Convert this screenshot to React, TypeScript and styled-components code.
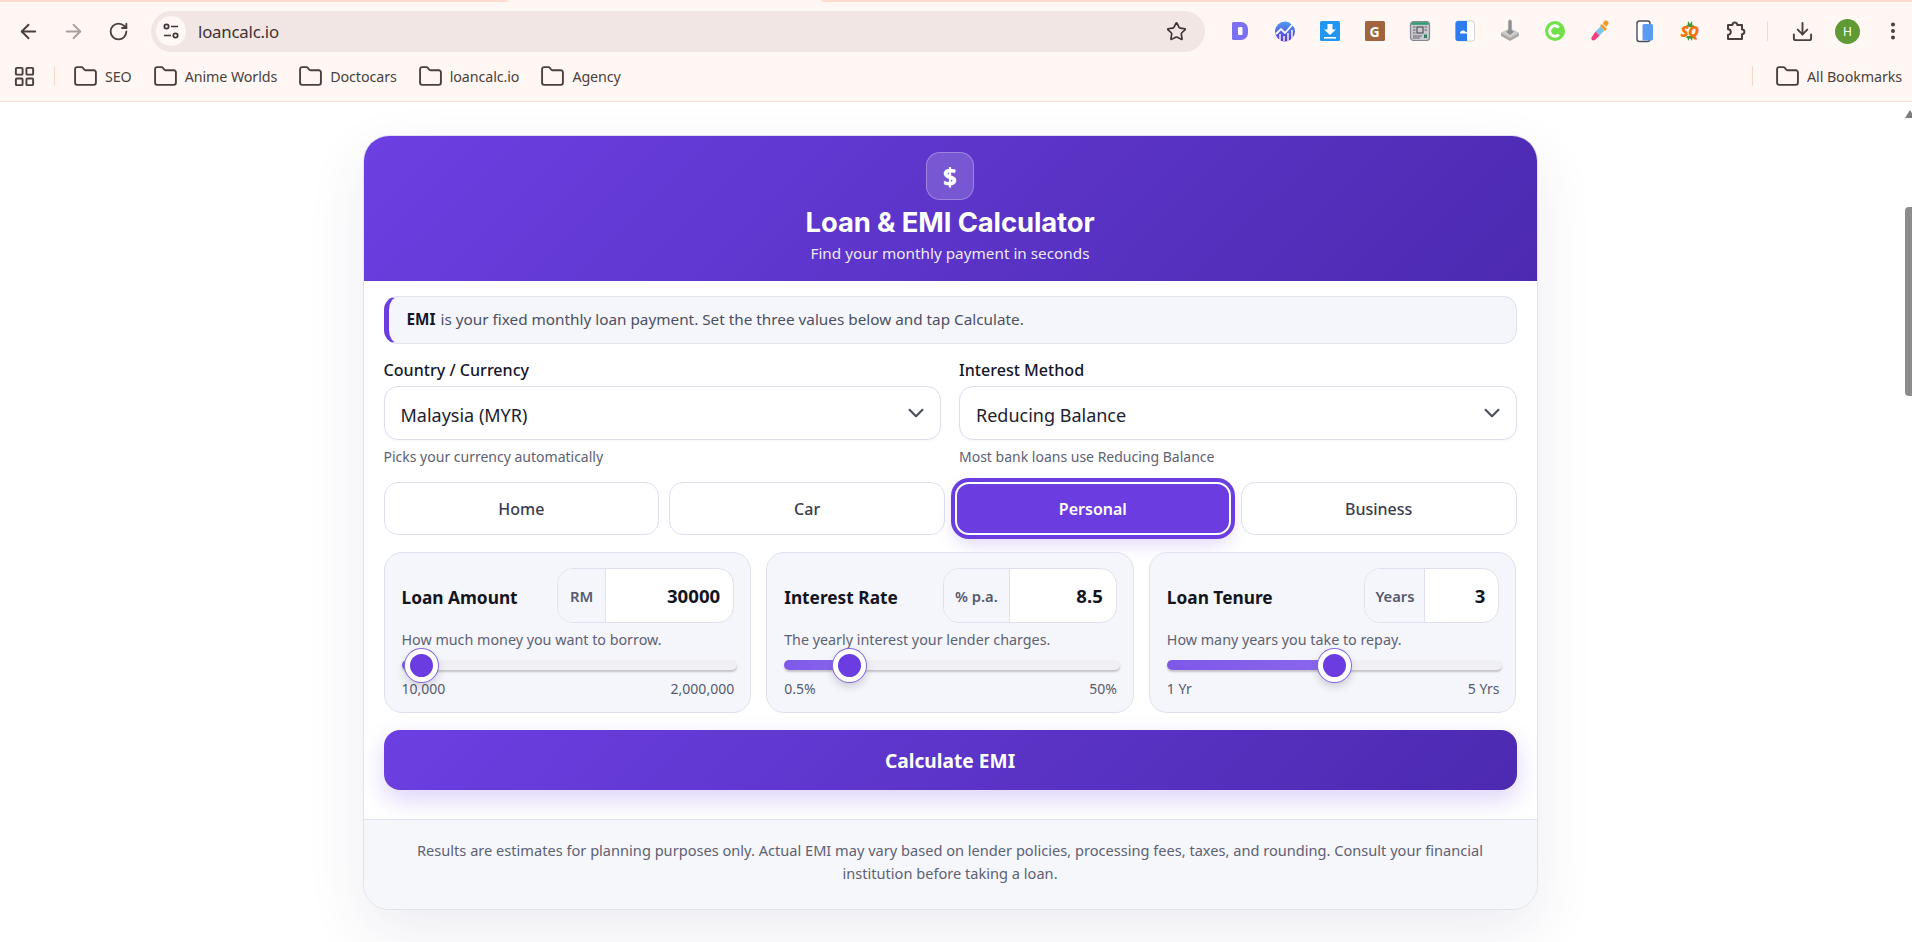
import React from 'react';
import styled, { createGlobalStyle } from 'styled-components';
import {
  ArrowLeft,
  ArrowRight,
  ChevronDown,
  Download,
  EllipsisVertical,
  Folder,
  LayoutGrid,
  RotateCw,
  Star,
} from 'lucide-react';

const PURPLE = '#6b3de0';
const GRADIENT = 'linear-gradient(135deg, #6c3fe2 0%, #4c2ab0 100%)';

const GlobalStyle = createGlobalStyle`
  html, body {
    margin: 0;
    padding: 0;
    background: #fff;
    overflow: hidden;
    font-family: "Noto Sans", "Open Sans", Arial, sans-serif;
  }
  * { box-sizing: border-box; }
`;

const Shell = styled.div`
  width: 1912px;
  height: 942px;
  display: flex;
  flex-direction: column;
  overflow: hidden;
`;

/* browser chrome */
const Strip = styled.div`
  height: 2px;
  flex: none;
  background: linear-gradient(90deg, #ffdcd0 0 506px, #fff6f2 510px 820px, #ffdcd0 824px);
`;

const Toolbar = styled.div`
  height: 58px;
  flex: none;
  padding-left: 6px;
  display: flex;
  align-items: center;
  background: #fff7f3;
`;

const ToolButton = styled.div<{ $muted?: boolean }>`
  width: 45px;
  height: 45px;
  flex: none;
  display: flex;
  align-items: center;
  justify-content: center;
  color: ${(p) => (p.$muted ? '#a8a09e' : '#4a3f3d')};
`;

const Omnibox = styled.div`
  width: 1054px;
  height: 41px;
  flex: none;
  margin-left: 10px;
  padding: 0 18px 0 5px;
  border-radius: 21px;
  background: #f1e6e4;
  display: flex;
  align-items: center;
  color: #3d3332;
`;

const SiteChip = styled.span`
  width: 30px;
  height: 30px;
  border-radius: 50%;
  background: #fff8f5;
  display: flex;
  align-items: center;
  justify-content: center;
`;

const UrlText = styled.span`
  margin-left: 12px;
  flex: 1;
  font-size: 16.8px;
  letter-spacing: -0.2px;
`;

const Extensions = styled.div`
  margin-left: 12px;
  display: flex;
  flex: none;
`;

const ExtSlot = styled.div`
  width: 45px;
  height: 45px;
  display: flex;
  align-items: center;
  justify-content: center;
  color: #4a3f3d;
`;

const ChromeDivider = styled.span`
  width: 1px;
  height: 20px;
  flex: none;
  background: #fbd6ca;
`;

const ToolbarDivider = styled(ChromeDivider)`
  margin: 0 12px 0 10px;
`;

const Avatar = styled.span`
  width: 25px;
  height: 25px;
  border-radius: 50%;
  background: #5f9a35;
  color: #fff;
  font-size: 12px;
  display: flex;
  align-items: center;
  justify-content: center;
`;

const BookmarksBar = styled.div`
  height: 42px;
  flex: none;
  padding: 0 10px 9px 13px;
  display: flex;
  align-items: center;
  background: #fff7f3;
  border-bottom: 1px solid #fbe2da;
  color: #4a3f3d;
`;

const AppsIcon = styled.span`
  display: flex;
  width: 23px;
`;

const BarDivider = styled(ChromeDivider)`
  margin: 0 18px 0 18px;
`;

const Bookmark = styled.div`
  display: flex;
  align-items: center;
  gap: 7px;
  margin-right: 21px;
  font-size: 14.3px;
  letter-spacing: -0.1px;
  white-space: nowrap;
`;

const BookmarkRight = styled.div`
  margin-left: auto;
  display: flex;
  align-items: center;
`;

const AllBookmarks = styled(Bookmark)`
  margin: 0 0 0 22px;
`;

/* page */
const Viewport = styled.div`
  flex: 1;
  display: flex;
  min-height: 0;
`;

const Page = styled.main`
  flex: 1;
  min-width: 0;
  padding: 33px 5px 0 0;
  display: flex;
  justify-content: center;
  align-items: flex-start;
`;

const Scrollbar = styled.div`
  width: 7px;
  padding-top: 8px;
  flex: none;
  display: flex;
  flex-direction: column;
  overflow: hidden;
`;

const ScrollArrow = styled.span`
  width: 0;
  height: 0;
  border-left: 5px solid transparent;
  border-right: 5px solid transparent;
  border-bottom: 8px solid #7d7d7d;
`;

const ScrollThumb = styled.span`
  height: 189px;
  margin-top: 89px;
  border-radius: 4px 0 0 4px;
  background: #8c8c8c;
`;

const Card = styled.section`
  width: 1175px;
  height: 775px;
  flex: none;
  border: 1px solid #e0e2ee;
  border-radius: 26px;
  background: #fff;
  box-shadow: 0 22px 60px rgba(50, 40, 110, 0.09);
  overflow: hidden;
`;

const Header = styled.header`
  height: 146px;
  padding-top: 17px;
  margin-top: -1px;
  background: ${GRADIENT};
  color: #fff;
  text-align: center;
  display: flex;
  flex-direction: column;
  align-items: center;
`;

const LogoTile = styled.div`
  width: 48px;
  height: 48px;
  border-radius: 14px;
  border: 1px solid rgba(255, 255, 255, 0.28);
  background: rgba(255, 255, 255, 0.17);
  font-size: 24px;
  font-weight: 800;
  display: flex;
  align-items: center;
  justify-content: center;
`;

const Title = styled.h1`
  margin: 5px 0 0;
  font-family: Inter, "Noto Sans", sans-serif;
  font-size: 27.4px;
  line-height: 34px;
  font-weight: 700;
  letter-spacing: -0.1px;
`;

const Subtitle = styled.p`
  margin: 4px 0 0;
  font-size: 15.3px;
  line-height: 20px;
  color: rgba(255, 255, 255, 0.92);
`;

const Body = styled.div`
  padding: 15px 20px 0;
`;

const InfoBox = styled.div`
  height: 48px;
  padding: 0 0 2px 18px;
  display: flex;
  align-items: center;
  gap: 5px;
  border: 1px solid #e0e2ee;
  border-left: 5px solid ${PURPLE};
  border-radius: 14px;
  background: #f5f6fb;
  font-size: 15.3px;
  color: #4b4f63;

  strong {
    color: #16162a;
    font-weight: 700;
  }
`;

const FieldGrid = styled.div`
  margin-top: 16px;
  display: grid;
  grid-template-columns: 1fr 1fr;
  gap: 18px;
`;

const FieldLabel = styled.label`
  display: block;
  font-size: 16.1px;
  line-height: 20px;
  font-weight: 500;
  color: #16162a;
`;

const SelectBox = styled.div`
  height: 54px;
  margin-top: 6px;
  padding: 0 11px 0 16px;
  display: flex;
  align-items: center;
  justify-content: space-between;
  border: 1px solid #dcdeec;
  border-radius: 14px;
  background: #fff;
  box-shadow: 0 1px 3px rgba(40, 40, 90, 0.04);
  font-size: 18px;
  color: #22222f;
`;

const SelectValue = styled.span`
  padding-top: 3px;
`;

const Hint = styled.p`
  margin: 8px 0 0;
  font-size: 14px;
  line-height: 18px;
  color: #5d6174;
`;

const Tabs = styled.div`
  margin-top: 16px;
  display: grid;
  grid-template-columns: repeat(4, 1fr);
  gap: 10px;
`;

const Tab = styled.button<{ $active?: boolean }>`
  height: 53px;
  border-radius: 14px;
  border: ${(p) => (p.$active ? '2px solid #fff' : '1px solid #dedfee')};
  background: ${(p) => (p.$active ? PURPLE : '#fff')};
  color: ${(p) => (p.$active ? '#fff' : '#3a3d50')};
  box-shadow: ${(p) =>
    p.$active ? `0 0 0 4px ${PURPLE}, 0 8px 18px rgba(107, 61, 224, 0.22)` : 'none'};
  font-family: inherit;
  font-size: 16px;
  font-weight: ${(p) => (p.$active ? 600 : 500)};
`;

const SliderGrid = styled.div`
  margin-top: 17px;
  display: grid;
  grid-template-columns: repeat(3, 1fr);
  gap: 15px;
`;

const SliderCard = styled.div`
  height: 161px;
  padding: 15px 16px 15px 17px;
  border: 1px solid #dfe1ee;
  border-radius: 18px;
  background: #f5f6fb;
`;

const SliderHead = styled.div`
  height: 55px;
  display: flex;
  align-items: center;
  justify-content: space-between;
`;

const SliderTitle = styled.span`
  margin-top: 3px;
  font-size: 17.3px;
  font-weight: 700;
  color: #14141f;
`;

const InputGroup = styled.div`
  height: 55px;
  display: flex;
  border: 1px solid #dfe1ee;
  border-radius: 16px;
  background: #fff;
  overflow: hidden;
`;

const Addon = styled.span<{ $w: number }>`
  width: ${(p) => p.$w}px;
  flex: none;
  display: flex;
  align-items: center;
  justify-content: center;
  background: #f5f6fb;
  border-right: 1px solid #dfe1ee;
  font-size: 14.8px;
  font-weight: 600;
  color: #565a6e;
`;

const ValueInput = styled.input<{ $w: number }>`
  width: ${(p) => p.$w}px;
  border: 0;
  outline: 0;
  background: transparent;
  padding: 0 13px 0 0;
  text-align: right;
  font-family: inherit;
  font-size: 18.6px;
  font-weight: 700;
  color: #14141f;
`;

const SliderDesc = styled.p`
  margin: 8px 0 0;
  font-size: 14.3px;
  line-height: 18px;
  color: #5d6174;
`;

const Track = styled.div`
  position: relative;
  height: 10px;
  margin: 11px -3px 0 0;
  border-radius: 5px;
  background: #f0f0f4;
  box-shadow: 0 2px 2px #c4c4c8;
`;

const TrackFill = styled.div`
  height: 100%;
  border-radius: 5px 0 0 5px;
  background: linear-gradient(90deg, #7e57e8, #8a68ec);
`;

const Thumb = styled.span`
  position: absolute;
  top: -11.5px;
  width: 33px;
  height: 33px;
  margin-left: -16.5px;
  border-radius: 50%;
  background: ${PURPLE};
  border: 5px solid #fff;
  box-shadow: 0 0 0 1px #8468e2, 0 4px 9px rgba(30, 30, 60, 0.22);
`;

const RangeRow = styled.div`
  margin-top: 10px;
  display: flex;
  justify-content: space-between;
  font-size: 14px;
  line-height: 18px;
  color: #565a6e;
`;

const CalcButton = styled.button`
  width: 100%;
  height: 60px;
  margin-top: 17px;
  border: 0;
  border-radius: 16px;
  background: ${GRADIENT};
  color: #fff;
  box-shadow: 0 10px 24px rgba(107, 61, 224, 0.22);
  font-family: inherit;
  font-size: 19.2px;
  font-weight: 700;
`;

const Footer = styled.footer`
  margin-top: 29px;
  height: 90px;
  padding: 19px 40px 0;
  border-top: 1px solid #e0e2ee;
  background: #f6f7fb;
  text-align: center;
  font-size: 14.6px;
  line-height: 23px;
  color: #5d6174;
`;

const TuneIcon = () => (
  <svg width="18" height="18" viewBox="0 0 18 18" fill="none" stroke="#3d3332" strokeWidth="1.7">
    <circle cx="4.5" cy="4.5" r="2.2" />
    <path d="M9 4.5h7M2 13.5h7" />
    <circle cx="13.5" cy="13.5" r="2.2" />
  </svg>
);

const PuzzleIcon = () => (
  <svg width="24" height="24" viewBox="0 0 24 24" fill="none" stroke="currentColor" strokeWidth="2" strokeLinejoin="round">
    <path d="M5 6h4.500a2.400 2.400 0 0 1 4.800 0H19v4.400a2.400 2.400 0 0 1 0 4.800V20H5v-4.200a2.800 2.800 0 0 0 0-5.600z" />
  </svg>
);

const ExtD = () => (
  <svg width="24" height="24" viewBox="0 0 24 24">
    <path d="M4 4.500a1.500 1.500 0 0 1 1.500-1.500H13a7 7 0 0 1 7 7v4a7 7 0 0 1-7 7H5.500A1.500 1.500 0 0 1 4 19.500z" fill="#7b6ff2" />
    <rect x="10" y="8" width="4.500" height="8" rx="1" fill="#fff" />
  </svg>
);

const ExtChart = () => (
  <svg width="24" height="24" viewBox="0 0 24 24">
    <defs>
      <linearGradient id="chartFill" x1="0" y1="0" x2="0" y2="1">
        <stop offset="0" stopColor="#4f9cf0" />
        <stop offset="1" stopColor="#5a35d8" />
      </linearGradient>
    </defs>
    <circle cx="12" cy="12.500" r="10" fill="url(#chartFill)" />
    <path d="M3 15l5-5 4 4 7-8" fill="none" stroke="#fff" strokeWidth="1.800" />
    <path d="M16.500 3.500H22V9z" fill="#fff" />
    <path d="M7 21v-6M11 22v-5M15 22v-8M19 20v-9" stroke="#fff" strokeWidth="1.400" />
  </svg>
);

const ExtDownload = () => (
  <svg width="24" height="24" viewBox="0 0 24 24">
    <rect x="2" y="2" width="20" height="20" rx="1.500" fill="#2196f3" />
    <path d="M9.500 5h5v5.500H18L12 16 6 10.500h3.500z" fill="#fff" />
    <rect x="6" y="18" width="12" height="1.600" fill="#fff" />
  </svg>
);

const ExtBadge = styled.span`
  width: 20px;
  height: 20px;
  background: #a0653d;
  color: #fff;
  font-size: 14px;
  font-weight: 700;
  border-radius: 1.5px;
  display: flex;
  align-items: center;
  justify-content: center;
`;

const ExtNews = () => (
  <svg width="24" height="24" viewBox="0 0 24 24">
    <rect x="2.500" y="2.500" width="19" height="19" rx="3" fill="#c9c9d2" stroke="#85858f" strokeWidth="1.200" />
    <rect x="3.500" y="3.200" width="17" height="2.600" fill="#2f9e6d" />
    <rect x="9" y="8" width="6" height="6" fill="none" stroke="#555" strokeWidth="1.200" />
    <path d="M5 8h2.500M5 11h2.500M5 14h2.500M16.500 8H19M16.500 11H19M5 17h9M5 19h7" stroke="#666" strokeWidth="1.100" />
    <rect x="16" y="15.500" width="3" height="3.500" fill="#2f7e5d" />
  </svg>
);

const ExtSplit = () => (
  <svg width="24" height="24" viewBox="0 0 24 24">
    <rect x="2.500" y="2" width="19" height="20" rx="2.500" fill="#fff" stroke="#d4d4d8" />
    <path d="M5 2h9v20H5a2.500 2.500 0 0 1-2.500-2.500v-15A2.500 2.500 0 0 1 5 2z" fill="#2b7df0" />
    <path d="M7 14.500c0-2 1.400-3 3-3 1 0 1.900.5 2.300 1.400 1.400-.2 2.200.6 2.200 1.600H7z" fill="#fff" />
  </svg>
);

const ExtJoystick = () => (
  <svg width="24" height="24" viewBox="0 0 24 24">
    <path d="M12 9l9 5v3l-9 5-9-5v-3z" fill="#a9a9a9" />
    <path d="M12 9l9 5-9 5-9-5z" fill="#c9c9c9" />
    <path d="M10 2.500a2 2 0 0 1 4 0V11l3 1.500-5 4-5-4 3-1.500z" fill="#8e8e8e" stroke="#f4f4f4" strokeWidth=".6" />
  </svg>
);

const ExtC = () => (
  <svg width="24" height="24" viewBox="0 0 24 24">
    <circle cx="12" cy="12" r="10" fill="#72e048" />
    <path d="M15.800 8.600a5.200 5.200 0 1 0 0 6.800" fill="none" stroke="#fff" strokeWidth="3" />
  </svg>
);

const ExtDropper = () => (
  <svg width="24" height="24" viewBox="0 0 24 24">
    <path d="M14 5l5 5-2 2-5-5z" fill="#f59a23" />
    <path d="M16 2.600a2.500 2.500 0 0 1 4.400 2.200l-2 3-3.600-3z" fill="#f59a23" />
    <path d="M12.500 7.500l4 4-5 5-4-4z" fill="#7cc5ee" />
    <path d="M7.500 12.500l4 4-4.500 4.500c-1.200.8-2.600.6-3.400-.4-.6-1 0-2.200.6-3z" fill="#ee3f80" />
  </svg>
);

const ExtPhone = () => (
  <svg width="24" height="24" viewBox="0 0 24 24">
    <rect x="4" y="2" width="13" height="20.500" rx="2.500" fill="#fff" stroke="#4a4f5a" strokeWidth="1.400" />
    <rect x="9.500" y="5" width="10.500" height="16.500" rx="1.500" fill="#5a9cf2" />
  </svg>
);

const SqWrap = styled.span`
  position: relative;
  width: 24px;
  height: 24px;
  display: flex;
  align-items: center;
  justify-content: center;
  color: #f5730f;
  font-size: 15px;
  font-weight: 800;
  font-style: italic;
  letter-spacing: -0.6px;

  svg {
    position: absolute;
    inset: 0;
  }
  b {
    position: relative;
  }
`;

const ExtSq = () => (
  <SqWrap>
    <svg width="24" height="24" viewBox="0 0 24 24">
      <path d="M8 6l1.500.5L10 2l2 3 2-3 .5 4.500L16 6l-.5 2h-7zM9 17h6l1.500 2-2-.3-.5 3.300-2-3-2 3-.5-3.300-2 .3z" fill="#3e9a3c" />
    </svg>
    <b>SQ</b>
  </SqWrap>
);

const bookmarks = ['SEO', 'Anime Worlds', 'Doctocars', 'loancalc.io', 'Agency'];

const sliders = [
  { title: 'Loan Amount', addon: 'RM', addonW: 48, inputW: 127, value: '30000', desc: 'How much money you want to borrow.', min: '10,000', max: '2,000,000', ratio: 0.01 },
  { title: 'Interest Rate', addon: '% p.a.', addonW: 66, inputW: 106, value: '8.5', desc: 'The yearly interest your lender charges.', min: '0.5%', max: '50%', ratio: 0.1616 },
  { title: 'Loan Tenure', addon: 'Years', addonW: 60, inputW: 73, value: '3', desc: 'How many years you take to repay.', min: '1 Yr', max: '5 Yrs', ratio: 0.5 },
];

const tabs = ['Home', 'Car', 'Personal', 'Business'];

const thumbLeft = (ratio: number) => `calc(16.5px + (100% - 33px) * ${ratio})`;

export default function App() {
  return (
    <Shell>
      <GlobalStyle />
      <Strip />
      <Toolbar>
        <ToolButton><ArrowLeft size={23} strokeWidth={2} /></ToolButton>
        <ToolButton $muted><ArrowRight size={23} strokeWidth={2} /></ToolButton>
        <ToolButton><RotateCw size={21} strokeWidth={2.1} /></ToolButton>
        <Omnibox>
          <SiteChip><TuneIcon /></SiteChip>
          <UrlText>loancalc.io</UrlText>
          <Star size={21} strokeWidth={1.9} />
        </Omnibox>
        <Extensions>
          <ExtSlot><ExtD /></ExtSlot>
          <ExtSlot><ExtChart /></ExtSlot>
          <ExtSlot><ExtDownload /></ExtSlot>
          <ExtSlot><ExtBadge>G</ExtBadge></ExtSlot>
          <ExtSlot><ExtNews /></ExtSlot>
          <ExtSlot><ExtSplit /></ExtSlot>
          <ExtSlot><ExtJoystick /></ExtSlot>
          <ExtSlot><ExtC /></ExtSlot>
          <ExtSlot><ExtDropper /></ExtSlot>
          <ExtSlot><ExtPhone /></ExtSlot>
          <ExtSlot><ExtSq /></ExtSlot>
          <ExtSlot><PuzzleIcon /></ExtSlot>
        </Extensions>
        <ToolbarDivider />
        <ToolButton><Download size={23} strokeWidth={2} /></ToolButton>
        <ToolButton><Avatar>H</Avatar></ToolButton>
        <ToolButton><EllipsisVertical size={22} strokeWidth={2.4} /></ToolButton>
      </Toolbar>
      <BookmarksBar>
        <AppsIcon><LayoutGrid size={23} strokeWidth={2} /></AppsIcon>
        <BarDivider />
        {bookmarks.map((name) => (
          <Bookmark key={name}>
            <Folder size={25} strokeWidth={1.8} />
            {name}
          </Bookmark>
        ))}
        <BookmarkRight>
          <ChromeDivider />
          <AllBookmarks>
            <Folder size={25} strokeWidth={1.8} />
            All Bookmarks
          </AllBookmarks>
        </BookmarkRight>
      </BookmarksBar>
      <Viewport>
        <Page>
          <Card>
            <Header>
              <LogoTile>$</LogoTile>
              <Title>Loan &amp; EMI Calculator</Title>
              <Subtitle>Find your monthly payment in seconds</Subtitle>
            </Header>
            <Body>
              <InfoBox>
                <strong>EMI</strong> is your fixed monthly loan payment. Set the three values below and tap Calculate.
              </InfoBox>
              <FieldGrid>
                <div>
                  <FieldLabel>Country / Currency</FieldLabel>
                  <SelectBox>
                    <SelectValue>Malaysia (MYR)</SelectValue>
                    <ChevronDown size={26} strokeWidth={1.9} color="#4a4d5c" />
                  </SelectBox>
                  <Hint>Picks your currency automatically</Hint>
                </div>
                <div>
                  <FieldLabel>Interest Method</FieldLabel>
                  <SelectBox>
                    <SelectValue>Reducing Balance</SelectValue>
                    <ChevronDown size={26} strokeWidth={1.9} color="#4a4d5c" />
                  </SelectBox>
                  <Hint>Most bank loans use Reducing Balance</Hint>
                </div>
              </FieldGrid>
              <Tabs>
                {tabs.map((tab) => (
                  <Tab key={tab} $active={tab === 'Personal'}>{tab}</Tab>
                ))}
              </Tabs>
              <SliderGrid>
                {sliders.map((s) => (
                  <SliderCard key={s.title}>
                    <SliderHead>
                      <SliderTitle>{s.title}</SliderTitle>
                      <InputGroup>
                        <Addon $w={s.addonW}>{s.addon}</Addon>
                        <ValueInput $w={s.inputW} readOnly value={s.value} />
                      </InputGroup>
                    </SliderHead>
                    <SliderDesc>{s.desc}</SliderDesc>
                    <Track>
                      <TrackFill style={{ width: thumbLeft(s.ratio) }} />
                      <Thumb style={{ left: thumbLeft(s.ratio) }} />
                    </Track>
                    <RangeRow>
                      <span>{s.min}</span>
                      <span>{s.max}</span>
                    </RangeRow>
                  </SliderCard>
                ))}
              </SliderGrid>
              <CalcButton>Calculate EMI</CalcButton>
            </Body>
            <Footer>
              Results are estimates for planning purposes only. Actual EMI may vary based on lender policies, processing fees, taxes, and rounding. Consult your financial institution before taking a loan.
            </Footer>
          </Card>
        </Page>
        <Scrollbar>
          <ScrollArrow />
          <ScrollThumb />
        </Scrollbar>
      </Viewport>
    </Shell>
  );
}
